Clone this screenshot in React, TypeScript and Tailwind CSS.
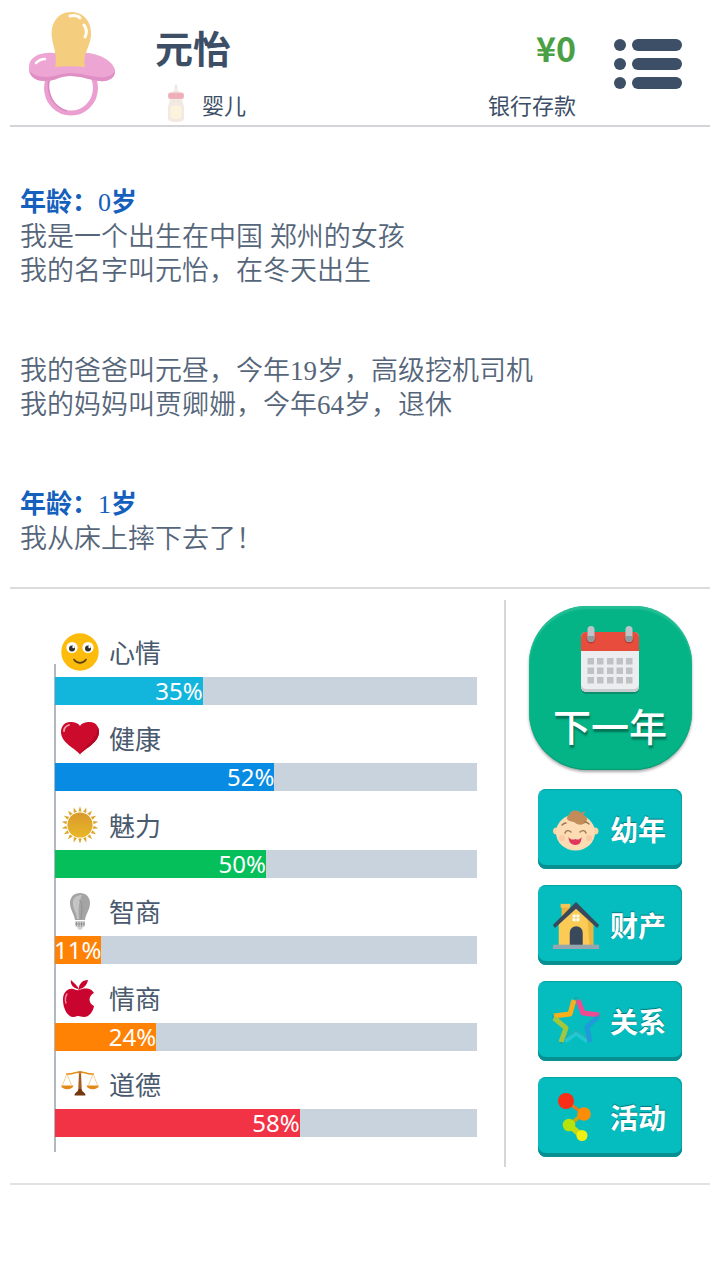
import React from 'react';

interface Stat {
  id: string;
  label: string;
  value: number;
  barClass: string;
  icon: React.ReactNode;
}

interface LogBlock {
  age?: number;
  lines: string[];
}

const SUN_RAYS = Array.from({ length: 18 }, (_, i) => i * 20);

function PacifierIcon() {
  return (
    <svg viewBox="0 0 88 106" className="h-[106px] w-[88px] shrink-0" aria-hidden="true">
      <ellipse cx="43" cy="77" rx="24.500" ry="25" fill="none" stroke="#eb9fd0" strokeWidth="5" />
      <path d="M21 66c-3 18 5 30 18 34" fill="none" stroke="#d886bd" strokeWidth="1.500" />
      <path
        d="M1 56c0-10 11-15 24-14l32 0c14 0 28 8 30 17 1 8-6 12-16 11-9-1-17-5-29-5-11 0-14 5-25 5C7 70 0 64 1 56z"
        fill="#eda6d3"
      />
      <path
        d="M1 59c1 8 8 11 16 11 11 0 14-5 25-5 12 0 20 4 29 5 9 1 16-3 16-10-3 5-9 7-17 6-10-1-16-4-28-4-10 0-15 4-24 4-8 0-15-3-17-7z"
        fill="#e08fc5"
      />
      <path
        d="M27 56c3-11-2-20-3-29C22 12 30 1 43 1c13 0 21 10 20 24-1 11-9 19-6 31-8-1-22-1-30 0z"
        fill="#f4cd7e"
      />
      <path d="M42 5c5-1 8 0 10 2M56 14c3 4 3 8 1 12" fill="none" stroke="#fffdf5" strokeWidth="3" strokeLinecap="round" />
      <path d="M8 52c2-2 5-4 9-4" fill="none" stroke="#fff" strokeWidth="2.500" strokeLinecap="round" />
    </svg>
  );
}

function BottleIcon() {
  return (
    <svg viewBox="0 0 18 40" className="h-10 w-[18px]" aria-hidden="true">
      <path d="M7.500 7V3.500C7.500 2 8 1.500 9 1.500s1.500.500 1.500 2V7l3 3h-9z" fill="#efe9e6" />
      <path d="M2 13c0-3 2-4 7-4s7 1 7 4l-1 3c0 3 2 5 2 8v11c0 3-3 4-8 4s-8-1-8-4V24c0-3 2-5 2-8z" fill="#f3e9e3" />
      <path d="M3.500 24c2-2 9-2 11 0v10c-1 3-10 3-11 0z" fill="#fbf3dc" />
      <rect x="1" y="9.500" width="16" height="6.500" rx="2.500" fill="#f1b5bd" />
      <path d="M4 11v4M7 11v4M11 11v4M14 11v4" stroke="#e59aa6" strokeWidth=".7" />
    </svg>
  );
}

function SmileIcon() {
  return (
    <svg viewBox="0 0 38 38" className="h-full w-full">
      <circle cx="19" cy="19" r="18.700" fill="#fdbb0b" />
      <circle cx="11" cy="14.500" r="5.600" fill="#fff" />
      <circle cx="27" cy="14.500" r="5.600" fill="#fff" />
      <circle cx="11" cy="15.500" r="3" fill="#303030" />
      <circle cx="27" cy="15.500" r="3" fill="#303030" />
      <circle cx="12.500" cy="14" r="1.200" fill="#fff" />
      <circle cx="28.500" cy="14" r="1.200" fill="#fff" />
      <path d="M13 26.500c3 4.500 9 4.500 12 0" fill="none" stroke="#5a4216" strokeWidth="1.600" strokeLinecap="round" />
    </svg>
  );
}

function HeartIcon() {
  return (
    <svg viewBox="0 0 38 38" className="h-full w-full">
      <path
        d="M19 35.500C14 29 0 24 0 13 0 7 4 3 9 3c5 0 8 1 10 4 2-3 5-4 10-4 5 0 9 4 9 10 0 11-14 16-19 22.500z"
        fill="#cb0a2c"
      />
      <path d="M19 35.500c5-6.500 19-11.500 19-22.500 0-2-.500-4-1.500-5.500C37 19 27 23 19 35.500z" fill="#b50826" />
      <path d="M3 12c0-3 2-5 5-6" fill="none" stroke="#f5a5b0" strokeWidth="1.800" strokeLinecap="round" />
    </svg>
  );
}

function SunIcon() {
  return (
    <svg viewBox="0 0 38 38" className="h-full w-full">
      <defs>
        <linearGradient id="sun-fill" x1="0" y1="0" x2="0" y2="1">
          <stop offset="0" stopColor="#d99a2b" />
          <stop offset="1" stopColor="#e9b728" />
        </linearGradient>
      </defs>
      {SUN_RAYS.map((angle) => (
        <path key={angle} d="M17.300 5.500L19 .300l1.700 5.200z" fill="#dba62c" transform={`rotate(${angle} 19 19)`} />
      ))}
      <circle cx="19" cy="19" r="12.600" fill="url(#sun-fill)" />
    </svg>
  );
}

function BulbIcon() {
  return (
    <svg viewBox="0 0 38 38" className="h-full w-full">
      <path d="M19 1c6 0 10 4 10 10 0 7-4 10-5 17H14C13 21 9 18 9 11 9 5 13 1 19 1z" fill="#a4a4a4" />
      <path d="M12 9c1-4 5-6 9-6-3 6-4 14-3 24h-2c0-7-5-10-4-18z" fill="#c4c4c4" />
      <path d="M18 8c4 2 3 10 2 19" fill="none" stroke="#8d8d8d" strokeWidth=".8" />
      <path d="M14 29h10l-.500 5.500-2 1-.500 2h-4l-.500-2-2-1z" fill="#d0d0d0" />
      <path d="M15.500 30v4M18 30v5M20.500 30v5M23 30v4M14 32h10" stroke="#8b8b8b" strokeWidth=".8" />
    </svg>
  );
}

function AppleIcon() {
  return (
    <svg viewBox="0 0 38 38" className="h-full w-full">
      <path
        d="M18 11c4-2 12-3 15 3-6 3-6 10 0 13-1 6-5 11-10 11-3 0-4-1-6-1s-2 1-5 1C7 38 2 30 2 21c0-8 5-12 10-11 2 0 4 2 6 1z"
        fill="#c9052f"
      />
      <path d="M18 12c0-4-3-6-8-11-1 4 2 8 7 9M18 11c-1-5 3-10 9-10-1 5-4 8-8 9" fill="#c9052f" />
      <path d="M6 15c-2 3-2 6-1 9" fill="none" stroke="#f090a5" strokeWidth="1.400" strokeLinecap="round" />
    </svg>
  );
}

function ScalesIcon() {
  return (
    <svg viewBox="0 0 38 38" className="h-full w-full">
      <path d="M5 9c6 1 9-2 14-2s8 3 14 2" fill="none" stroke="#e39022" strokeWidth="1.600" />
      <path d="M6 9L1.500 20M6 9l4.500 11M32 9l-4.500 11M32 9l4.500 11" stroke="#efc27c" strokeWidth=".8" />
      <path d="M0 20.500h12.500c-1 5-11.500 5-12.500 0zM25.500 20.500H38c-1 5-11.500 5-12.500 0z" fill="#e28a18" />
      <path d="M18 7h2l.800 19H17.200z" fill="#a35b20" />
      <circle cx="19" cy="7.500" r="1.600" fill="#d17d1c" />
      <path d="M17.500 24h3c0 3 4 3 4 6.500h-11c0-3.500 4-3.500 4-6.500z" fill="#74370f" />
    </svg>
  );
}

function CalendarIcon() {
  return (
    <svg viewBox="0 0 58 68" className="h-[68px] w-[58px]" aria-hidden="true">
      <rect y="8" width="58" height="60" rx="5" fill="#0a8e6c" />
      <rect y="6" width="58" height="60" rx="5" fill="#ecedef" />
      <path d="M0 58v3a5 5 0 0 0 5 5h48a5 5 0 0 0 5-5v-3a5 5 0 0 1-5 5H5a5 5 0 0 1-5-5z" fill="#c9cdd0" />
      <path d="M0 25V11a5 5 0 0 1 5-5h48a5 5 0 0 1 5 5v14z" fill="#e74c3c" />
      <circle cx="10" cy="13" r="4.500" fill="#b93a2e" />
      <circle cx="48" cy="13" r="4.500" fill="#b93a2e" />
      <rect x="6.500" width="7" height="16" rx="3.500" fill="#bdc3c7" />
      <rect x="44.500" width="7" height="16" rx="3.500" fill="#bdc3c7" />
      <path d="M6.500 10h7v2.500a3.500 3.500 0 0 1-7 0zM44.500 10h7v2.500a3.500 3.500 0 0 1-7 0z" fill="#8f9b9f" />
      {[32, 41.5, 51].map((y) =>
        [6.5, 16, 26, 35.5, 45].map((x) => (
          <rect key={`${x}-${y}`} x={x} y={y} width="6.500" height="6.500" fill="#bfc1c4" />
        )),
      )}
    </svg>
  );
}

function BabyIcon() {
  return (
    <svg viewBox="0 0 48 48" className="h-full w-full">
      <circle cx="4.500" cy="26" r="3.500" fill="#fbd3a4" />
      <circle cx="43" cy="26" r="3.500" fill="#fbd3a4" />
      <ellipse cx="23.500" cy="27.500" rx="19.500" ry="18" fill="#fddcb4" />
      <path d="M17 10c1-5 9-6 12-2l4-2c0 2-1 3-2 4 4 1 5 4 3 7-3 4-9 3-12 0-4-1-7-1-7-4 0-1 1-3 2-3z" fill="#c18c5a" />
      <path d="M13 28c1-3 4-3 6-1M28 27c2-2 5-2 6 1M10 20c1-1 2-2 4-2M33 17c2 0 3 1 4 2" fill="none" stroke="#9a7350" strokeWidth="1.400" strokeLinecap="round" />
      <circle cx="10" cy="33" r="3" fill="#fbc9a3" />
      <circle cx="37" cy="33" r="3" fill="#fbc9a3" />
      <path d="M16.500 32c2 3 5 3 7 2 2 1 4 1 6-2 0 5-2 8-6 8s-7-3-7-8z" fill="#e2355c" />
    </svg>
  );
}

function HouseIcon() {
  return (
    <svg viewBox="0 0 48 50" className="h-full w-full">
      <path d="M9 5h8v14l-8 8z" fill="#eab23f" />
      <rect x="8" y="3" width="10" height="4" fill="#f5c554" />
      <path d="M6 24L24 6l18 18v22H6z" fill="#fbcb55" />
      <path d="M36 18l6 6v22h-4z" fill="#e9b440" />
      <path d="M24 1L0 25l2 3L24 8l22 20 2-3z" fill="#39485a" />
      <path d="M17.500 46V33a6.500 6.500 0 0 1 13.500 0v13z" fill="#39485a" />
      <rect x="20.500" y="14" width="7" height="7" rx="1" fill="#fff" />
      <path d="M24 14v7M20.500 17.500h7" stroke="#f3cf75" strokeWidth="1" />
      <rect y="45.500" width="48" height="4.500" fill="#96a5ae" />
    </svg>
  );
}

function StarIcon() {
  return (
    <svg viewBox="0 0 48 48" className="h-full w-full" fill="none" strokeWidth="5" strokeLinejoin="round">
      <path d="M13 44l11-8 12 8" stroke="#21c8d2" />
      <path d="M22 3l-4 14-16 2" stroke="#f9ae1c" />
      <path d="M26 3l5 13 16 2" stroke="#ee4b92" />
      <path d="M46 20L35 30l3 15" stroke="#1e9bd8" />
      <path d="M2 21l12 10-5 14" stroke="#a2c73e" />
      <path d="M22 1h4M1 18v3M47 17v3M8 46l3 0M12 42l12-8 12 8" stroke="#4f6f62" strokeOpacity=".45" strokeWidth="1" />
    </svg>
  );
}

function NodesIcon() {
  return (
    <svg viewBox="0 0 48 48" className="h-full w-full">
      <path d="M14 8l18 13" stroke="#e7791c" strokeWidth="3" />
      <path d="M31 21L17 32" stroke="#c9a512" strokeWidth="4" />
      <path d="M17 32l13 11" stroke="#c6da10" strokeWidth="6" />
      <circle cx="14" cy="8" r="8" fill="#fa2d17" />
      <circle cx="32" cy="21" r="6.800" fill="#fb8d09" />
      <circle cx="17" cy="32" r="6.300" fill="#b5e30d" />
      <circle cx="30" cy="42.500" r="5.500" fill="#f2ef12" />
    </svg>
  );
}

const LOG: LogBlock[] = [
  { age: 0, lines: ['我是一个出生在中国 郑州的女孩', '我的名字叫元怡，在冬天出生'] },
  { lines: ['我的爸爸叫元昼，今年19岁，高级挖机司机', '我的妈妈叫贾卿姗，今年64岁，退休'] },
  { age: 1, lines: ['我从床上摔下去了！'] },
];

const STATS: Stat[] = [
  { id: 'mood', label: '心情', value: 35, barClass: 'bg-[#12b5db]', icon: <SmileIcon /> },
  { id: 'health', label: '健康', value: 52, barClass: 'bg-[#078be3]', icon: <HeartIcon /> },
  { id: 'charm', label: '魅力', value: 50, barClass: 'bg-[#05bf5b]', icon: <SunIcon /> },
  { id: 'iq', label: '智商', value: 11, barClass: 'bg-[#ff8205]', icon: <BulbIcon /> },
  { id: 'eq', label: '情商', value: 24, barClass: 'bg-[#ff8205]', icon: <AppleIcon /> },
  { id: 'moral', label: '道德', value: 58, barClass: 'bg-[#f23345]', icon: <ScalesIcon /> },
];

const ACTIONS = [
  { id: 'childhood', label: '幼年', icon: <BabyIcon /> },
  { id: 'assets', label: '财产', icon: <HouseIcon /> },
  { id: 'relations', label: '关系', icon: <StarIcon /> },
  { id: 'activities', label: '活动', icon: <NodesIcon /> },
];

function Header() {
  return (
    <header className="flex items-start border-b-2 border-[#d3d3d8] pt-[11px] pr-7 pl-[18px] text-[#3c4f66]">
      <PacifierIcon />
      <div className="ml-[39px] flex-1">
        <h1 className="pt-[10px] text-[38px] leading-[52px] font-bold">元怡</h1>
        <div className="mt-[10px] flex items-start gap-[17px] pl-3 text-[22px] leading-[42px]">
          <BottleIcon />
          <span>婴儿</span>
        </div>
      </div>
      <div className="mr-[38px] text-right">
        <p className="pt-[10px] text-[34px] leading-[54px] font-bold text-[#4ba046]">¥0</p>
        <p className="mt-2 text-[22px] leading-[42px]">银行存款</p>
      </div>
      <button type="button" aria-label="菜单" className="mt-7 text-[#3c4f66]">
        <svg viewBox="0 0 68 50" className="h-[50px] w-[68px]" fill="currentColor">
          {[6, 25, 44].map((y) => (
            <g key={y}>
              <circle cx="6" cy={y} r="6" />
              <rect x="18" y={y - 6} width="50" height="12" rx="6" />
            </g>
          ))}
        </svg>
      </button>
    </header>
  );
}

function LifeLog() {
  return (
    <section className="flex flex-col gap-[66px] border-b-2 border-[#dcdcdf] px-[10px] pt-[59px] pb-[31px] font-['Liberation_Serif','Noto_Sans_CJK_SC',serif] text-[27px] leading-[34px] font-[350] text-[#56667a]">
      {LOG.map((block) => (
        <div key={block.lines[0]}>
          {block.age !== undefined && (
            <h2 className="text-[26px] font-bold text-[#1560bd]">
              年龄：<span className="font-normal">{block.age}</span>岁
            </h2>
          )}
          {block.lines.map((line) => (
            <p key={line}>{line}</p>
          ))}
        </div>
      ))}
    </section>
  );
}

function StatRow({ stat }: { stat: Stat }) {
  return (
    <div>
      <div className="mb-[6px] flex h-[38px] items-center gap-[10px] pl-[6px]">
        <span className="h-[38px] w-[38px]" aria-hidden="true">
          {stat.icon}
        </span>
        <span className="text-[26px] leading-[36px] text-[#4a5a6e]">{stat.label}</span>
      </div>
      <div
        role="progressbar"
        aria-label={stat.label}
        aria-valuenow={stat.value}
        aria-valuemin={0}
        aria-valuemax={100}
        className="relative h-7 bg-[#c9d3de]"
      >
        <div
          className={`flex h-full items-center justify-end font-['Noto_Sans',sans-serif] text-[24px] leading-7 text-white ${stat.barClass}`}
          style={{ width: `${stat.value}%` }}
        >
          {stat.value}%
        </div>
      </div>
    </div>
  );
}

export default function App() {
  return (
    <main className="min-h-screen bg-white px-[10px] font-['Noto_Sans_CJK_SC',sans-serif]">
      <Header />
      <LifeLog />
      <section className="flex border-b-2 border-[#e2e2e4] pt-[11px] pb-4">
        <div className="relative flex flex-1 flex-col justify-between border-r-2 border-[#d6d6d9] pt-[33px] pr-[27px] pb-[30px] pl-[45px]">
          <div className="absolute top-[64px] bottom-[15px] left-[44px] w-[2px] bg-[#b3b7be]" />
          {STATS.map((stat) => (
            <StatRow key={stat.id} stat={stat} />
          ))}
        </div>
        <div className="flex w-[204px] flex-col items-center gap-4 pt-[6px] pb-[10px] pl-[4px]">
          <button
            type="button"
            className="mb-[3px] flex h-[164px] w-[163px] flex-col items-center rounded-[58px] bg-[#04b487] pt-5 text-white shadow-[inset_0_3px_2px_#26bf95,inset_0_-1px_1px_#069a75,0_2px_3px_rgba(0,0,0,0.35)]"
          >
            <CalendarIcon />
            <span className="mt-2 text-[38px] leading-[46px] font-medium [text-shadow:1px_3px_2px_rgba(0,60,45,0.55)]">
              下一年
            </span>
          </button>
          {ACTIONS.map((action) => (
            <button
              key={action.id}
              type="button"
              className="flex h-20 w-[144px] items-center gap-[10px] rounded-lg bg-[#05bdbf] pl-[14px] text-white shadow-[inset_0_-4px_0_#078f92,inset_-1px_1px_1px_#07a3a5]"
            >
              <span className="h-12 w-12" aria-hidden="true">
                {action.icon}
              </span>
              <span className="text-[28px] leading-[40px] font-bold [text-shadow:0_-1px_1px_rgba(0,70,75,0.6)]">
                {action.label}
              </span>
            </button>
          ))}
        </div>
      </section>
    </main>
  );
}
